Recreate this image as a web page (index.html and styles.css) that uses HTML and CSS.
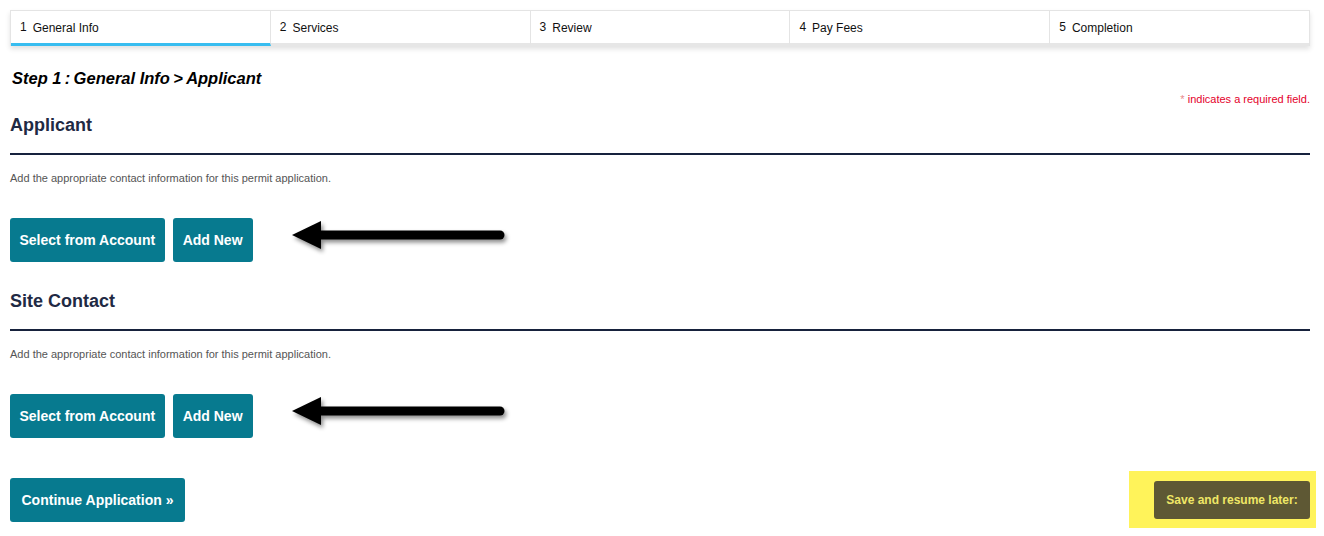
FILE: index.html
```html
<!DOCTYPE html>
<html lang="en">
<head>
    <meta charset="UTF-8">
    <title>Permit Application - General Info</title>
    <link rel="stylesheet" href="styles.css">
</head>
<body>
    <div class="page">
        <ul class="steps">
            <li class="step active"><span class="step-num">1</span>General Info</li>
            <li class="step"><span class="step-num">2</span>Services</li>
            <li class="step"><span class="step-num">3</span>Review</li>
            <li class="step"><span class="step-num">4</span>Pay Fees</li>
            <li class="step"><span class="step-num">5</span>Completion</li>
        </ul>

        <h1 class="step-title">Step 1&thinsp;:&thinsp;General Info&thinsp;&gt;&thinsp;Applicant</h1>
        <p class="required-note"><span class="star">*</span> indicates a required field.</p>

        <div class="section">
            <div class="section-head">
                <h2>Applicant</h2>
            </div>
            <p class="section-desc">Add the appropriate contact information for this permit application.</p>
            <div class="actions">
                <button class="btn">Select from Account</button>
                <button class="btn">Add New</button>
                <svg class="arrow" width="225" height="44" viewBox="0 0 225 44">
                    <defs>
                        <filter id="shadow1" x="-10%" y="-40%" width="120%" height="200%">
                            <feDropShadow dx="2" dy="3" stdDeviation="2" flood-color="#000" flood-opacity="0.45"/>
                        </filter>
                    </defs>
                    <g filter="url(#shadow1)">
                        <line x1="30" y1="17" x2="212" y2="17" stroke="#000" stroke-width="9" stroke-linecap="round"/>
                        <polygon points="4,17 33,3 33,31" fill="#000"/>
                    </g>
                </svg>
            </div>
        </div>

        <div class="section">
            <div class="section-head">
                <h2>Site Contact</h2>
            </div>
            <p class="section-desc">Add the appropriate contact information for this permit application.</p>
            <div class="actions">
                <button class="btn">Select from Account</button>
                <button class="btn">Add New</button>
                <svg class="arrow" width="225" height="44" viewBox="0 0 225 44">
                    <defs>
                        <filter id="shadow2" x="-10%" y="-40%" width="120%" height="200%">
                            <feDropShadow dx="2" dy="3" stdDeviation="2" flood-color="#000" flood-opacity="0.45"/>
                        </filter>
                    </defs>
                    <g filter="url(#shadow2)">
                        <line x1="30" y1="17" x2="212" y2="17" stroke="#000" stroke-width="9" stroke-linecap="round"/>
                        <polygon points="4,17 33,3 33,31" fill="#000"/>
                    </g>
                </svg>
            </div>
        </div>

        <div class="footer">
            <button class="btn btn-continue">Continue Application &raquo;</button>
            <div class="highlight">
                <button class="btn-save">Save and resume later:</button>
            </div>
        </div>
    </div>
</body>
</html>
```

FILE: styles.css
```css
body {
    margin: 0;
    padding: 10px;
    font-family: "Liberation Sans", Arial, sans-serif;
    color: #222;
    background: #fff;
}

.page {
    width: 1300px;
}

/* step tabs */
.steps {
    display: flex;
    margin: 0;
    padding: 0;
    list-style: none;
    border: 1px solid #e4e4e4;
    border-bottom: none;
    box-shadow: 0 3px 5px rgba(0, 0, 0, 0.12);
}

.step {
    flex: 1;
    height: 32px;
    padding-left: 9px;
    font-size: 12px;
    line-height: 32px;
    color: #111;
    border-right: 1px solid #e4e4e4;
    border-bottom: 3px solid #e6e6e6;
}

.step:last-child {
    border-right: none;
}

.step.active {
    border-bottom-color: #38bdf0;
}

.step-num {
    display: inline-block;
    margin-right: 6px;
    vertical-align: 1px;
}

.step-title {
    margin: 22px 0 0 2px;
    font-size: 16.5px;
    line-height: 20px;
    font-weight: bold;
    font-style: italic;
    color: #000;
}

.required-note {
    margin: 5px 0 0;
    text-align: right;
    font-size: 11px;
    line-height: 13px;
    color: #e4002b;
}

.star {
    color: #e88a8a;
}

/* sections */
.section {
    margin-top: 8px;
}

.section + .section {
    margin-top: 28px;
}

.section-head {
    padding-bottom: 17px;
    border-bottom: 2px solid #17223d;
}

.section-head h2 {
    margin: 0;
    font-size: 18px;
    line-height: 22px;
    color: #1f2a44;
}

.section-desc {
    margin: 16px 0 0;
    font-size: 11px;
    line-height: 15px;
    color: #555;
}

.actions {
    display: flex;
    align-items: flex-start;
    gap: 8px;
    margin-top: 32px;
}

.btn {
    height: 44px;
    padding: 0 10px;
    border: none;
    border-radius: 3px;
    background: #077a8f;
    color: #fff;
    font-family: "Liberation Sans", Arial, sans-serif;
    font-size: 14px;
    font-weight: bold;
    cursor: pointer;
}

.actions .btn:first-child {
    padding: 0 9.5px;
}

.arrow {
    margin-left: 27px;
    overflow: visible;
}

/* footer */
.footer {
    display: flex;
    justify-content: space-between;
    align-items: center;
    margin-top: 33px;
}

.btn-continue {
    padding: 0 11.5px;
}

.highlight {
    margin-right: -6px;
    padding: 10px 6px 9px 25px;
    background: #fff35a;
}

.btn-save {
    display: block;
    width: 156px;
    height: 38px;
    border: none;
    border-radius: 3px;
    background: #5e5834;
    color: #efe766;
    font-family: "Liberation Sans", Arial, sans-serif;
    font-size: 12px;
    font-weight: bold;
    cursor: pointer;
}
```
